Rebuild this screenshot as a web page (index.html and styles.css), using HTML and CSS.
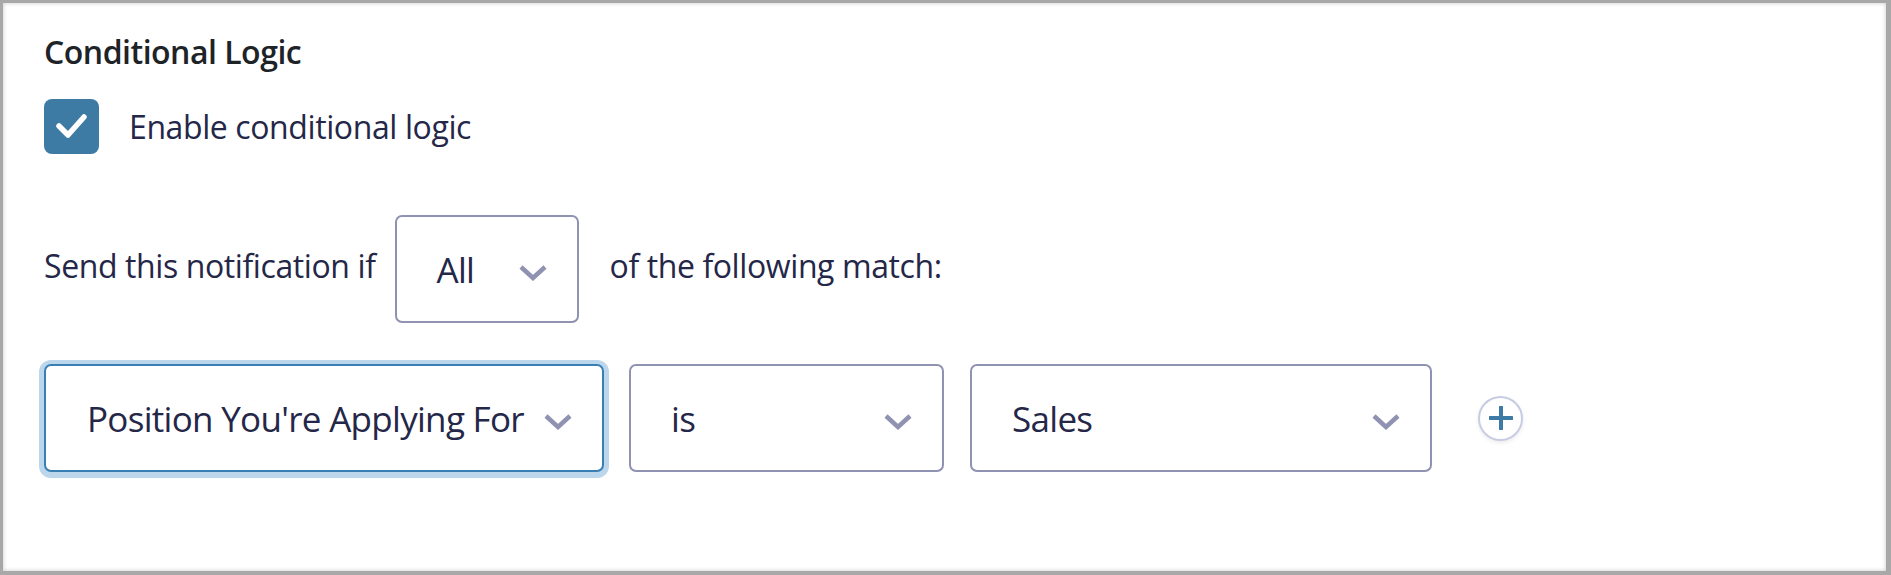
FILE: index.html
```html
<!DOCTYPE html>
<html lang="en">
<head>
<meta charset="utf-8">
<title>Conditional Logic</title>
<link rel="stylesheet" href="styles.css">
</head>
<body>
<div class="frame">
  <h2 class="title">Conditional Logic</h2>
  <label class="check-row">
    <span class="checkbox">
      <svg width="55" height="55" viewBox="0 0 55 55"><polyline points="15,27 24,36 40,18" fill="none" stroke="#fff" stroke-width="5.5" stroke-linecap="round" stroke-linejoin="round"/></svg>
    </span>
    <span class="check-label">Enable conditional logic</span>
  </label>
  <div class="rule-row">
    <span class="label">Send this notification if</span>
    <div class="select select-all"><span class="value">All</span><svg class="chev" width="28" height="16" viewBox="0 0 28 16"><polyline points="2,2 14,13 26,2" fill="none" stroke="#9092b2" stroke-width="4.5"/></svg></div>
    <span class="label label-after">of the following match:</span>
  </div>
  <div class="cond-row">
    <div class="select select-field focused"><span class="value">Position You're Applying For</span><svg class="chev" width="28" height="16" viewBox="0 0 28 16"><polyline points="2,2 14,13 26,2" fill="none" stroke="#9092b2" stroke-width="4.5"/></svg></div>
    <div class="select select-op"><span class="value">is</span><svg class="chev" width="28" height="16" viewBox="0 0 28 16"><polyline points="2,2 14,13 26,2" fill="none" stroke="#9092b2" stroke-width="4.5"/></svg></div>
    <div class="select select-val"><span class="value">Sales</span><svg class="chev" width="28" height="16" viewBox="0 0 28 16"><polyline points="2,2 14,13 26,2" fill="none" stroke="#9092b2" stroke-width="4.5"/></svg></div>
    <span class="add-btn"><svg width="24" height="24" viewBox="0 0 24 24"><path d="M12 1v22M1 12h22" stroke="#3e7ba4" stroke-width="4" stroke-linecap="round"/></svg></span>
  </div>
</div>
</body>
</html>
```

FILE: styles.css
```css
html, body {
  margin: 0;
  padding: 0;
  background: #ffffff;
}

.frame {
  box-sizing: border-box;
  width: 1891px;
  height: 575px;
  border: 3px solid #a8a8a8;
  border-right-width: 5px;
  border-bottom-width: 4px;
  box-shadow: inset 0 0 4px rgba(0, 0, 0, 0.22);
  padding: 29px 0 0 41px;
  font-family: "Open Sans", "Noto Sans", sans-serif;
  color: #242748;
}

.title {
  margin: 0;
  font-size: 32px;
  line-height: 40px;
  font-weight: 600;
  letter-spacing: -0.5px;
  color: #1d2327;
}

.check-row {
  display: flex;
  align-items: center;
  margin-top: 27px;
}

.checkbox {
  width: 55px;
  height: 55px;
  border-radius: 8px;
  background: #3e7ba4;
  display: flex;
}

.check-label {
  margin-left: 30px;
  font-size: 32px;
  line-height: 40px;
  letter-spacing: -0.4px;
}

.rule-row {
  display: flex;
  align-items: center;
  margin-top: 61px;
}

.label {
  font-size: 32px;
  line-height: 40px;
  letter-spacing: -0.4px;
  margin-top: -6px;
}

.label-after {
  margin-left: 31px;
}

.select {
  box-sizing: border-box;
  height: 108px;
  border: 2px solid #9092b2;
  border-radius: 7px;
  display: flex;
  align-items: center;
  justify-content: space-between;
  padding: 0 30px 0 40px;
  font-size: 35px;
  letter-spacing: -0.7px;
  background: #fff;
}

.select .value {
  white-space: nowrap;
}

.chev {
  margin-top: 7px;
  flex: none;
}

.select-all {
  width: 184px;
  margin-left: 19px;
}

.cond-row {
  display: flex;
  align-items: center;
  margin-top: 41px;
}

.select-field {
  width: 560px;
  padding-left: 41px;
}

.focused {
  border-color: #3a7fb4;
  box-shadow: 0 1px 0 5px #bcd6ec;
}

.select-op {
  width: 315px;
  margin-left: 25px;
}

.select-val {
  width: 462px;
  margin-left: 26px;
}

.add-btn {
  box-sizing: border-box;
  width: 45px;
  height: 45px;
  border-radius: 50%;
  border: 2px solid #c8cce2;
  box-shadow: 0 2px 4px rgba(0, 0, 0, 0.08);
  margin-left: 46px;
  display: flex;
  align-items: center;
  justify-content: center;
}
```
